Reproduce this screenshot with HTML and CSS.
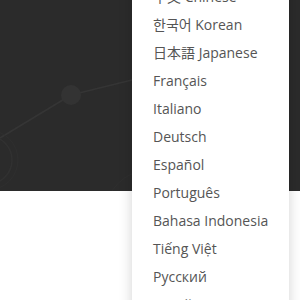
FILE: index.html
```html
<!DOCTYPE html>
<html>
<head>
    <title>Language menu</title>
    <link rel="stylesheet" href="styles.css">
</head>
<body>
    <div class="hero">
        <svg class="decor" width="300" height="191" viewBox="0 0 300 191">
            <line x1="0" y1="138" x2="71" y2="95" stroke="#353535" stroke-width="1.5"/>
            <line x1="71" y1="95" x2="140" y2="78" stroke="#353535" stroke-width="1.5"/>
            <circle cx="71" cy="95" r="10" fill="#333"/>
            <circle cx="-12" cy="160" r="24" fill="none" stroke="#313131" stroke-width="1.5"/>
            <circle cx="-12" cy="160" r="30" fill="none" stroke="#2f2f2f" stroke-width="1"/>
            <circle cx="150" cy="215" r="45" fill="none" stroke="#2f2f2f" stroke-width="1"/>
        </svg>
    </div>
    <div class="page"></div>

    <ul class="lang-menu">
        <li>中文 Chinese</li>
        <li>한국어 Korean</li>
        <li>日本語 Japanese</li>
        <li>Français</li>
        <li>Italiano</li>
        <li>Deutsch</li>
        <li>Español</li>
        <li>Português</li>
        <li>Bahasa Indonesia</li>
        <li>Tiếng Việt</li>
        <li>Русский</li>
        <li>العربية</li>
    </ul>
</body>
</html>
```

FILE: styles.css
```css
body {
    margin: 0;
    font-family: 'Open Sans', 'Noto Sans CJK KR', 'Noto Sans CJK JP', sans-serif;
    background-color: #fff;
    overflow: hidden;
}

.hero {
    height: 191px;
    background-color: #2b2b2b;
}

.decor {
    display: block;
}

.page {
    height: 109px;
    background-color: #fff;
}

.lang-menu {
    position: absolute;
    left: 132px;
    top: -17px;
    width: 157px;
    margin: 0;
    padding: 0;
    list-style: none;
    background-color: #fff;
    box-shadow: 0 0 12px rgba(0, 0, 0, 0.18);
}

.lang-menu li {
    height: 28px;
    line-height: 28px;
    padding-left: 21px;
    font-size: 14px;
    color: #555;
    white-space: nowrap;
}
```
